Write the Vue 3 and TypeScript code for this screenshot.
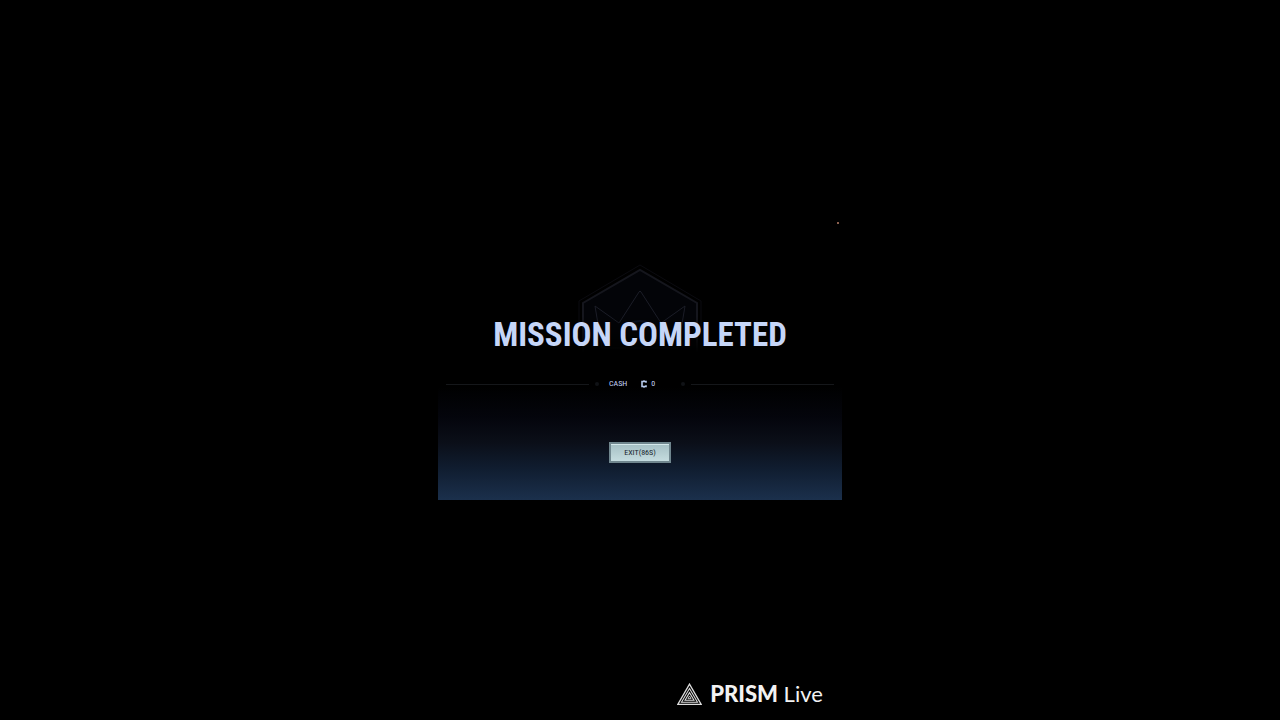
<script setup lang="ts">
import { ref } from 'vue'

const title = 'MISSION COMPLETED'
const cash = ref(0)
const secondsLeft = ref(86)
const closed = ref(false)

function exitMission(): void {
  closed.value = true
}
</script>

<template>
  <div class="screen">
    <main class="stage">
      <section v-if="!closed" class="result">
        <header class="hero">
          <svg class="emblem" viewBox="0 0 124 104" aria-hidden="true">
            <defs>
              <linearGradient id="fade" x1="0" y1="0" x2="0" y2="1">
                <stop offset="0" stop-color="#fff" />
                <stop offset="0.5" stop-color="#fff" />
                <stop offset="0.85" stop-color="#000" />
              </linearGradient>
              <mask id="emblem-mask">
                <rect width="124" height="104" fill="url(#fade)" />
              </mask>
            </defs>
            <g mask="url(#emblem-mask)" fill="none">
              <path d="M1 104V37L62 1l61 36v67" stroke="#0b0b10" />
              <path d="M5 104V39L62 6l57 33v65" fill="#030408" stroke="#15161d" stroke-width="2" />
              <path d="M24 84L17 42l24 17L61 28q1-2 2 0l20 31 24-17-7 42z" stroke="#1b1d27" />
              <path d="M51 60q11-6 22 0" stroke="#0c1020" stroke-width="2" />
            </g>
          </svg>
          <h1 class="title">{{ title }}</h1>
        </header>
        <div class="panel">
          <div class="reward">
            <span class="rule"></span>
            <span class="pip"></span>
            <div class="cash">
              <span>CASH</span>
              <svg class="coin" viewBox="0 0 7 8" aria-hidden="true">
                <path d="M6 2.8V1.5H2v5h4V5.2" fill="none" stroke="#b7cbed" stroke-width="1.6" />
                <path d="M4 0v1M4 7v1" stroke="#b7cbed" />
              </svg>
              <span>{{ cash }}</span>
            </div>
            <span class="pip"></span>
            <span class="rule"></span>
          </div>
          <button class="exit" type="button" @click="exitMission">EXIT({{ secondsLeft }}S)</button>
        </div>
      </section>
    </main>
    <footer class="brand">
      <svg class="brand-mark" viewBox="0 0 24 22" aria-hidden="true">
        <g fill="none" stroke="#dcdcdc">
          <path d="M12 1L23.2 20.5H.8z" stroke-width="1.2" />
          <path d="M12 5.2L19.7 18.5H4.3z" />
          <path d="M12 9.2L16.3 16.5H7.7z" />
          <path d="M12 12.4L13.5 15h-3z" stroke-width=".8" />
        </g>
      </svg>
      <span class="brand-name"><strong>PRISM</strong> Live</span>
    </footer>
    <span class="pointer"></span>
  </div>
</template>

<style>
html,
body {
  background: #000;
}
</style>

<style scoped>
.screen {
  position: relative;
  box-sizing: border-box;
  min-height: 100vh;
  display: flex;
  flex-direction: column;
  background: #000;
  color: #c6d6f8;
  font-family: "Roboto Condensed", "Liberation Sans Narrow", "Liberation Sans", sans-serif;
}
.stage {
  flex: 1;
  display: flex;
  flex-direction: column;
  align-items: center;
  justify-content: center;
  padding-top: 96px;
}
.result {
  width: 404px;
  max-width: 100%;
}
.hero {
  position: relative;
  display: flex;
  justify-content: center;
  padding-top: 48px;
}
.emblem {
  position: absolute;
  top: 0;
  left: 50%;
  width: 124px;
  height: 104px;
  margin-left: -62px;
}
.title {
  position: relative;
  margin: 0;
  font-size: 33px;
  line-height: 46px;
  font-weight: 700;
  white-space: nowrap;
}
.panel {
  display: flex;
  flex-direction: column;
  align-items: center;
  gap: 53px;
  padding: 21px 0 37px;
  background: linear-gradient(#000 20%, #04050c 42%, #0b0f19 60%, #101d30 78%, #1b304c);
}
.reward {
  box-sizing: border-box;
  width: 100%;
  display: flex;
  align-items: center;
  gap: 6px;
  padding: 0 8px;
}
.rule {
  flex: 1;
  height: 1px;
  background: #15171a;
}
.pip {
  width: 4px;
  height: 4px;
  border-radius: 2px;
  background: #101216;
}
.cash {
  box-sizing: border-box;
  width: 70px;
  display: flex;
  align-items: center;
  padding-left: 4px;
  font-size: 8px;
  line-height: 10px;
}
.coin {
  width: 7px;
  height: 8px;
  margin: 0 4px 0 13px;
}
.exit {
  width: 62px;
  height: 21px;
  padding: 0;
  border: 2px solid #70868e;
  background: linear-gradient(#a5bfc4, #c5dcdf);
  box-shadow: inset 0 1px 0 #d5e8eb;
  color: #17252c;
  font-family: inherit;
  font-size: 8px;
  line-height: 16px;
  cursor: pointer;
}
.brand {
  display: flex;
  align-items: center;
  justify-content: center;
  gap: 8px;
  height: 52px;
  padding-left: 220px;
  color: #f2f2f2;
  font-family: Lato, sans-serif;
  font-size: 22px;
  line-height: 26px;
}
.brand-mark {
  width: 25px;
  height: 23px;
}
.brand-name strong {
  font-weight: 900;
}
.pointer {
  position: absolute;
  top: 222px;
  left: 837px;
  width: 2px;
  height: 2px;
  background: #8a5f4d;
}
</style>
